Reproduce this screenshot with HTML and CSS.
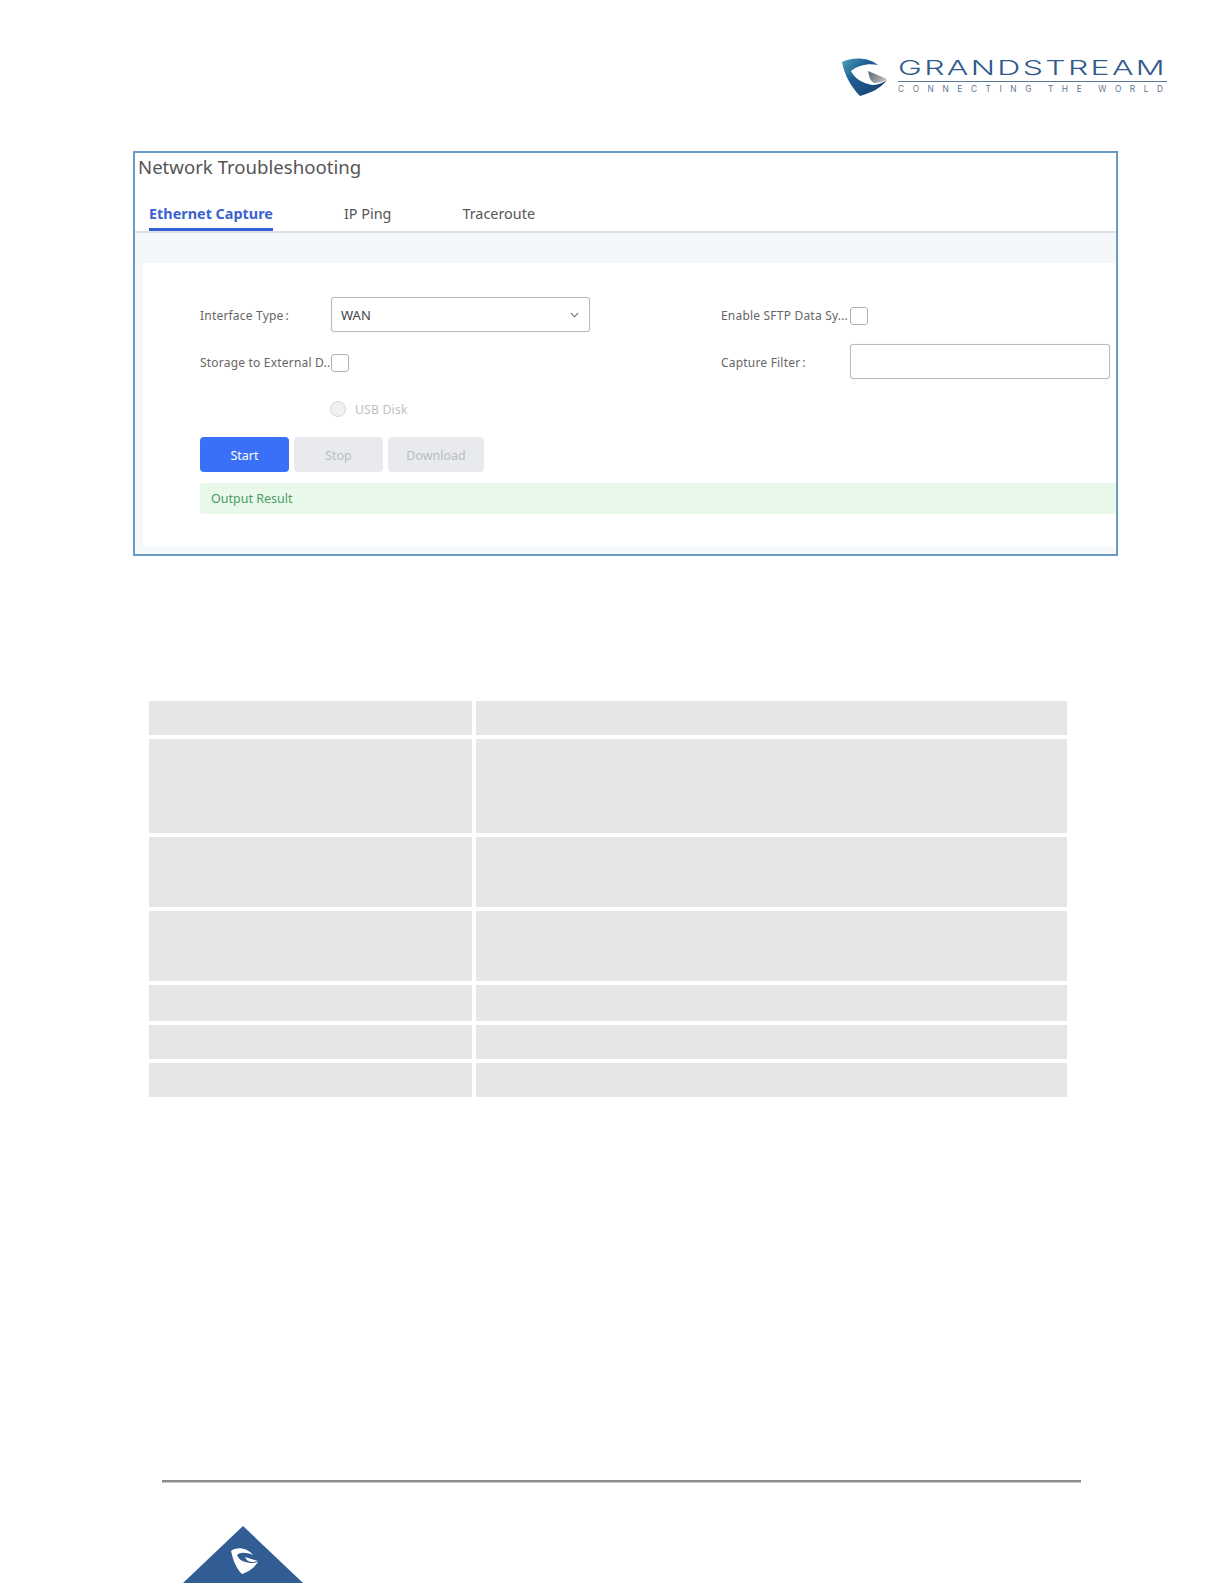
FILE: index.html
```html
<!DOCTYPE html>
<html lang="en">
<head>
<meta charset="utf-8">
<title>Network Troubleshooting</title>
<link rel="stylesheet" href="styles.css">
</head>
<body>
<header class="brand">
  <svg class="logo" viewBox="0 0 332 44" width="332" height="44" aria-label="Grandstream">
    <defs>
      <linearGradient id="sw" x1="0" y1="0" x2="1" y2="0.7">
        <stop offset="0" stop-color="#4fa3b8"/>
        <stop offset="0.4" stop-color="#1f5f96"/>
        <stop offset="1" stop-color="#173f6e"/>
      </linearGradient>
      <linearGradient id="sg" x1="0" y1="0" x2="1" y2="0.5">
        <stop offset="0" stop-color="#55636f"/>
        <stop offset="1" stop-color="#b8bcc0"/>
      </linearGradient>
    </defs>
    <path fill="url(#sw)" d="M6 6 C16 1 32 1 42 9 C33 7 22 9 15 15 C18 22 26 27 36 29 C41 29 47 27 51 24 C45 32 35 37 24 40 C15 31 8 18 6 6Z"/>
    <path fill="url(#sg)" d="M32 15 L51 23 C47 26 42 27 38 27 C34 25 33 20 32 15Z"/>
    <text class="logo-name" x="62" y="19" textLength="269" lengthAdjust="spacingAndGlyphs">GRANDSTREAM</text>
    <rect x="62" y="25" width="269" height="1" fill="#5b7796"/>
    <text class="logo-tag" x="62" y="36">CONNECTING THE WORLD</text>
  </svg>
</header>

<section class="window">
  <h1 class="title">Network Troubleshooting</h1>
  <nav class="tabs">
    <a class="tab active">Ethernet Capture</a>
    <a class="tab">IP Ping</a>
    <a class="tab">Traceroute</a>
  </nav>
  <div class="band"></div>
  <div class="panel">
    <div class="form">
      <div class="field">
        <span class="label">Interface Type<i class="colon">:</i></span>
        <div class="select"><span>WAN</span>
          <svg class="chev" viewBox="0 0 10 6" width="9" height="6"><path d="M1 1l4 4 4-4" fill="none" stroke="#666" stroke-width="1.2"/></svg>
        </div>
      </div>
      <div class="field right">
        <span class="label">Enable SFTP Data Sy...</span>
        <span class="check"></span>
      </div>
      <div class="field">
        <span class="label">Storage to External D..</span>
        <span class="check low"></span>
      </div>
      <div class="field right">
        <span class="label">Capture Filter<i class="colon">:</i></span>
        <div class="input"></div>
      </div>
      <div class="field radio-row">
        <span class="label"></span>
        <span class="radio"></span>
        <span class="radio-text">USB Disk</span>
      </div>
    </div>
    <div class="actions">
      <button class="btn primary">Start</button>
      <button class="btn">Stop</button>
      <button class="btn wide">Download</button>
    </div>
    <div class="result">Output Result</div>
  </div>
</section>

<table class="blank">
  <tbody>
    <tr class="r34"><td></td><td></td></tr>
    <tr class="r94"><td></td><td></td></tr>
    <tr class="r70"><td></td><td></td></tr>
    <tr class="r70"><td></td><td></td></tr>
    <tr class="r36"><td></td><td></td></tr>
    <tr class="r34"><td></td><td></td></tr>
    <tr class="r34"><td></td><td></td></tr>
  </tbody>
</table>

<footer class="foot">
  <div class="rule"></div>
  <svg class="mark" viewBox="0 0 120 57" width="120" height="57" aria-hidden="true">
    <path d="M60 0 L120 57 L0 57Z" fill="#315c94"/>
    <path fill="#fff" d="M48 25 C53 21 63 21 70 29 C63 26 57 26 54 29 C56 35 63 37 70 37 L75 36 C71 42 65 46 59 48 C53 42 50 34 48 25Z"/>
    <path fill="#fff" d="M62 31 L75 35 L70 36 C66 36 63 34 62 31Z"/>
  </svg>
</footer>
</body>
</html>
```
FILE: styles.css
```css
* { box-sizing: border-box; }
html, body { margin: 0; padding: 0; background: #fff; }
body {
  width: 1224px;
  height: 1584px;
  overflow: hidden;
  font-family: "Noto Sans", "Open Sans", "Liberation Sans", sans-serif;
  color: #555;
}

/* brand */
.brand { display: flex; justify-content: flex-end; height: 151px; padding: 56px 56px 0 0; }
.logo { display: block; overflow: visible; }
.logo-name { font-family: Inter, "Liberation Sans", sans-serif; font-weight: 300; font-size: 20.6px; letter-spacing: 1.5px; fill: #2f5a8a; }
.logo-tag { font-family: Inter, "Liberation Sans", sans-serif; font-size: 8.3px; letter-spacing: 8.6px; word-spacing: -3px; fill: #5a7591; }

/* window */
.window {
  width: 985px;
  height: 405px;
  margin-left: 133px;
  border: 2px solid #6a9ac6;
  overflow: hidden;
  background: #f6f9fb;
}
.title { margin: 0; padding: 0 0 0 3px; font-size: 18.6px; font-weight: 400; line-height: 28px; color: #555; height: 47px; background: #fff; }
.tabs { display: flex; height: 33px; padding-left: 14px; border-bottom: 2px solid #dcdfe3; background: #fff; }
.tab { font-size: 14.4px; line-height: 28px; height: 31px; margin-right: 71px; color: #555; }
.tab.active { color: #3a62d0; font-weight: 700; border-bottom: 3px solid #3160d8; }
.band { height: 30px; background: #f3f7fa; }
.panel { margin-left: 8px; padding: 34px 0 0 57px; background: #fff; height: 284px; }

.form { display: grid; grid-template-columns: 521px 1fr; grid-auto-rows: 47px; }
.field { display: flex; align-items: center; height: 35px; font-size: 12px; }
.label { flex: 0 0 131px; padding-top: 1px; color: #666; white-space: nowrap; overflow: hidden; letter-spacing: .2px; }
.right .label { flex-basis: 129px; }
.colon { font-style: normal; margin-left: 2px; }
.select, .input { border: 1px solid #b8bcc2; border-radius: 3px; height: 35px; background: #fff; box-shadow: 0 0 1px #ccc; }
.select { width: 259px; display: flex; align-items: center; justify-content: space-between; padding: 0 10px 0 9px; font-size: 13px; color: #444; }
.input { width: 260px; }
.check { width: 18px; height: 18px; margin-top: 3px; border: 1px solid #aeb2b8; border-radius: 3px; background: #fff; }
.check.low { margin-top: 2px; }
.radio-row { height: 24px; margin-top: 6px; }
.radio { width: 16px; height: 16px; margin-left: -1px; border: 1px solid #d5d7da; border-radius: 50%; background: #f0f1f2; margin-right: 9px; }
.radio-text { color: #bdbfc3; font-size: 12.2px; letter-spacing: .2px; }

.actions { display: flex; gap: 5px; margin-top: -1px; }
.btn { width: 89px; height: 35px; border: 0; border-radius: 4px; background: #e8eaee; color: #b9bcc2; font: 12.5px "Noto Sans", "Open Sans", sans-serif; padding: 1px 0 0; }
.btn.wide { width: 96px; }
.btn.primary { background: #3a6ff7; color: #fff; }
.result { margin-top: 11px; height: 31px; line-height: 32px; padding-left: 11px; background: #e8f9ea; color: #4f9a68; font-size: 12.5px; border-radius: 3px 0 0 3px; }

/* blank table */
.blank { margin: 145px 0 0 149px; width: 918px; table-layout: fixed; border-collapse: separate; border-spacing: 0; }
.blank td { background: #e6e6e6; border-bottom: 4px solid #fff; padding: 0; }
.blank td:first-child { width: 327px; border-right: 4px solid #fff; }
.r34 td { height: 38px; }
.r94 td { height: 98px; }
.r70 td { height: 74px; }
.r36 td { height: 40px; }

/* footer */
.foot { padding-left: 162px; }
.rule { width: 919px; height: 3px; background: #8c8c8c; border-bottom: 1px solid #c8c8c8; margin-top: 379px; }
.mark { display: block; margin: 43px 0 0 21px; }
```
